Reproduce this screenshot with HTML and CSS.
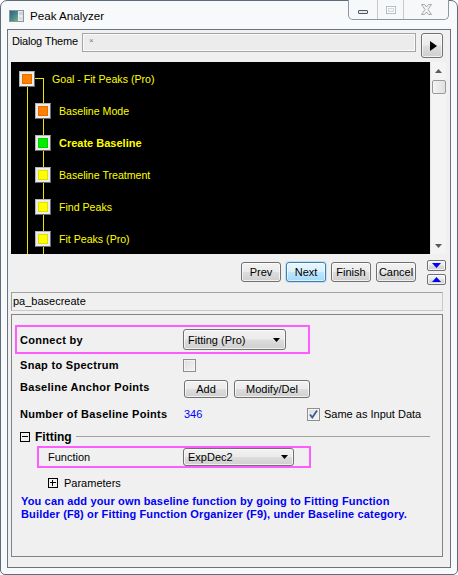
FILE: index.html
```html
<!DOCTYPE html>
<html>
<head>
<meta charset="utf-8">
<title>Peak Analyzer</title>
<link rel="stylesheet" href="styles.css">
</head>
<body>
<div class="window">
  <div class="titlebar">
    <svg class="app-icon" width="15" height="12" viewBox="0 0 15 12">
      <defs>
        <linearGradient id="ig" x1="0" y1="0" x2="1" y2="1">
          <stop offset="0" stop-color="#2a5f86"/>
          <stop offset="0.6" stop-color="#4f8f8a"/>
          <stop offset="1" stop-color="#7fb07a"/>
        </linearGradient>
      </defs>
      <rect x="0.5" y="0.5" width="14" height="11" fill="#e8ecef" stroke="#8a96a0"/>
      <rect x="1" y="1" width="8" height="10" fill="url(#ig)"/>
      <rect x="10" y="2" width="4" height="3" fill="#c9d3da"/>
      <rect x="10" y="7" width="4" height="3" fill="#d7dee3"/>
    </svg>
    <span class="title">Peak Analyzer</span>
    <div class="caption-btns">
      <div class="cb cb-min"><span class="min-glyph"></span></div>
      <div class="cb cb-max"><span class="max-glyph"></span></div>
      <div class="cb cb-close">
        <svg width="13" height="11" viewBox="0 0 13 11">
          <path d="M1.5 0.5 L4.5 0.5 L6.5 3 L8.5 0.5 L11.5 0.5 L8 5.5 L11.5 10.5 L8.5 10.5 L6.5 8 L4.5 10.5 L1.5 10.5 L5 5.5 Z" fill="#f4f4f4" stroke="#a9a9a9"/>
        </svg>
      </div>
    </div>
  </div>

  <div class="client">
    <div class="theme-row">
      <span class="theme-label">Dialog Theme</span>
      <div class="theme-input"><span class="theme-x">×</span></div>
      <button class="btn arrow-btn"><span class="tri-right"></span></button>
    </div>

    <div class="tree-panel">
      <div class="tree">
        <span class="tline v1"></span>
        <span class="tline h1"></span>
        <span class="tline v2"></span>
        <div class="node goal"><span class="nbox"><span class="nfill orange"></span></span><span class="nlabel">Goal - Fit Peaks (Pro)</span></div>
        <div class="node child"><span class="nbox"><span class="nfill orange"></span></span><span class="nlabel">Baseline Mode</span></div>
        <div class="node child"><span class="nbox"><span class="nfill green"></span></span><span class="nlabel cur">Create Baseline</span></div>
        <div class="node child"><span class="nbox"><span class="nfill yellow"></span></span><span class="nlabel">Baseline Treatment</span></div>
        <div class="node child"><span class="nbox"><span class="nfill yellow"></span></span><span class="nlabel">Find Peaks</span></div>
        <div class="node child"><span class="nbox"><span class="nfill yellow"></span></span><span class="nlabel">Fit Peaks (Pro)</span></div>
      </div>
      <div class="vscroll">
        <div class="sb-arrow"><svg width="7" height="4" viewBox="0 0 7 4"><polygon points="0,4 3.5,0 7,4" fill="#5a5a5a"/></svg></div>
        <div class="sb-thumb"></div>
        <div class="sb-track"></div>
        <div class="sb-arrow"><svg width="7" height="4" viewBox="0 0 7 4"><polygon points="0,0 7,0 3.5,4" fill="#5a5a5a"/></svg></div>
      </div>
    </div>

    <div class="nav-row">
      <button class="btn nav-btn">Prev</button>
      <button class="btn nav-btn btn-focus">Next</button>
      <button class="btn nav-btn">Finish</button>
      <button class="btn nav-btn">Cancel</button>
      <div class="mini-col">
        <button class="btn mini-btn"><svg width="9" height="5" viewBox="0 0 9 5"><polygon points="0,0 9,0 4.5,5" fill="#0000ff"/></svg></button>
        <button class="btn mini-btn"><svg width="9" height="5" viewBox="0 0 9 5"><polygon points="0,5 4.5,0 9,5" fill="#0000ff"/></svg></button>
      </div>
    </div>

    <div class="name-field">pa_basecreate</div>

    <div class="settings">
      <div class="hl-row hl-connect">
        <span class="lbl b">Connect by</span>
        <div class="btn combo combo-connect"><span>Fitting (Pro)</span><svg class="caret" width="7" height="4" viewBox="0 0 7 4"><polygon points="0,0 7,0 3.5,4" fill="#000"/></svg></div>
      </div>
      <div class="row row-snap">
        <span class="lbl b">Snap to Spectrum</span>
        <span class="check"></span>
      </div>
      <div class="row row-anchor">
        <span class="lbl b lift">Baseline Anchor Points</span>
        <button class="btn btn-add">Add</button>
        <button class="btn btn-mod">Modify/Del</button>
      </div>
      <div class="row row-num">
        <span class="lbl b">Number of Baseline Points</span>
        <span class="num">346</span>
        <span class="check"><svg width="11" height="11" viewBox="0 0 11 11"><path d="M2 5.5 L4.3 8.5 L9 1.5" fill="none" stroke="#3d5a98" stroke-width="1.8"/></svg></span>
        <span class="chk-text">Same as Input Data</span>
      </div>
      <div class="group-row">
        <span class="tog"><span class="tog-h"></span></span>
        <span class="b group-name">Fitting</span>
        <span class="group-line"></span>
      </div>
      <div class="hl-row hl-func">
        <span class="lbl2">Function</span>
        <div class="btn combo combo-func"><span>ExpDec2</span><svg class="caret" width="7" height="4" viewBox="0 0 7 4"><polygon points="0,0 7,0 3.5,4" fill="#000"/></svg></div>
      </div>
      <div class="param-row">
        <span class="tog"><span class="tog-h"></span><span class="tog-v"></span></span>
        <span class="param-name">Parameters</span>
      </div>
      <p class="note">You can add your own baseline function by going to Fitting Function<br>Builder (F8) or Fitting Function Organizer (F9), under Baseline category.</p>
    </div>
  </div>
</div>
</body>
</html>
```

FILE: styles.css
```css
* { box-sizing: border-box; }
html, body { margin: 0; padding: 0; }
body {
  width: 458px;
  height: 575px;
  overflow: hidden;
  background: #ffffff;
  font-family: "Liberation Sans", Arial, sans-serif;
  font-size: 11px;
  color: #000;
}
button { font-family: inherit; font-size: 11px; color: #000; padding: 0; margin: 0; }

.window {
  width: 458px;
  height: 575px;
  border: 1px solid #5e6c7a;
  border-radius: 7px 7px 5px 5px;
  background: #f8f9fa;
  display: flex;
  flex-direction: column;
  padding-bottom: 6px;
}

/* title bar */
.titlebar { height: 28px; flex: none; display: flex; align-items: flex-start; }
.app-icon { margin: 9px 0 0 8px; flex: none; }
.title { margin: 6px 0 0 6px; font-size: 11.6px; line-height: 17px; }
.caption-btns {
  margin: -1px 8px 0 auto;
  display: flex;
  height: 20px;
  border: 1px solid #8b97a4;
  border-top: none;
  border-radius: 0 0 5px 5px;
  background: #f7f8f9;
  overflow: hidden;
}
.cb { height: 19px; display: flex; align-items: center; justify-content: center; }
.cb-min { width: 29px; border-right: 1px solid #c3cad1; }
.cb-max { width: 26px; border-right: 1px solid #c3cad1; }
.cb-close { width: 44px; }
.min-glyph { width: 10px; height: 4px; border: 1px solid #4d5560; background: #e8ecef; margin-top: 5px; border-radius: 1px; }
.max-glyph { width: 10px; height: 8px; border: 1px solid #b6bdc4; background: #f4f5f6; box-shadow: inset 0 0 0 1px #fff, inset 0 0 0 2px #d3d8dd; margin-top: 1px; }

/* client area */
.client {
  flex: 1;
  margin: 0 6px;
  border: 1px solid #67737f;
  background: #f0f0f0;
  display: flex;
  flex-direction: column;
  padding: 3px 0 0 3px;
}

.theme-row { display: flex; height: 25px; flex: none; }
.theme-label { margin-left: 1px; width: 70px; line-height: 16px; letter-spacing: -0.2px; }
.theme-input {
  width: 334px;
  height: 19px;
  border: 1px solid #a4a4a4;
  box-shadow: inset 0 0 0 1px #fafafa;
  background: #ececec;
  position: relative;
}
.theme-x { position: absolute; left: 6px; top: 2px; font-size: 8px; color: #777; }
.arrow-btn { margin-left: 5px; width: 22px; height: 25px; display: flex; align-items: center; justify-content: center; }
.tri-right { width: 0; height: 0; border-top: 5px solid transparent; border-bottom: 5px solid transparent; border-left: 7px solid #000; margin-left: 2px; }

/* generic Win7 button */
.btn {
  border: 1px solid #707070;
  border-radius: 3px;
  background: linear-gradient(#f2f2f2 0%, #ebebeb 48%, #dddddd 52%, #cfcfcf 100%);
  box-shadow: inset 0 0 0 1px rgba(255,255,255,0.7);
}
.btn-focus {
  border-color: #3c7fb1;
  background: linear-gradient(#eaf6fd 0%, #d9f0fc 48%, #bee6fd 52%, #a7d9f5 100%);
  box-shadow: inset 0 0 0 1px rgba(255,255,255,0.6), 0 0 0 1px rgba(120,190,235,0.35);
}

/* tree */
.tree-panel { margin-top: 4px; width: 435px; height: 192px; display: flex; flex: none; }
.tree { flex: 1; background: #000; position: relative; padding-top: 1px; overflow: hidden; }
.tline { position: absolute; background: #e8e800; }
.v1 { left: 16px; top: 24px; bottom: 0; width: 1px; }
.h1 { left: 24px; top: 16px; width: 8px; height: 1px; }
.v2 { left: 32px; top: 16px; bottom: 0; width: 1px; }
.node { height: 32px; display: flex; align-items: center; position: relative; }
.nbox {
  width: 16px; height: 16px; flex: none;
  border: 1px solid;
  border-color: #b4b4b4 #6a6a6a #6a6a6a #b4b4b4;
  background: #ececec;
  padding: 2px;
  display: flex;
}
.nfill { flex: 1; border: 1px solid rgba(0,0,0,0.12); }
.orange { background: #ff8000; }
.green { background: #00ee00; }
.yellow { background: #ffff00; }
.goal .nbox { margin-left: 8px; }
.goal .nlabel { margin-left: 17px; }
.child .nbox { margin-left: 24px; }
.child .nlabel { margin-left: 8px; }
.nlabel { color: #ffff00; font-size: 10.6px; white-space: nowrap; }
.nlabel.cur { font-weight: bold; font-size: 11px; }

.vscroll { width: 16px; background: #f4f4f4; border-left: 1px solid #e6e6e6; display: flex; flex-direction: column; align-items: center; }
.sb-arrow { height: 17px; width: 100%; display: flex; align-items: center; justify-content: center; }
.sb-thumb {
  margin-top: 1px;
  width: 14px; height: 14px;
  border: 1px solid #9a9a9a;
  border-radius: 2px;
  background: linear-gradient(90deg, #f4f4f4, #e0e0e0);
}
.sb-track { flex: 1; }

/* nav row */
.nav-row { margin-top: 5px; width: 435px; height: 26px; flex: none; display: flex; justify-content: flex-end; align-items: center; gap: 5px; }
.nav-btn { width: 40px; height: 20px; line-height: 16px; }
.mini-col { margin-left: 6px; display: flex; flex-direction: column; gap: 3px; }
.mini-btn { width: 19px; height: 11px; display: flex; align-items: center; justify-content: center; border-radius: 2px; }

.name-field {
  margin-top: 7px;
  width: 432px; height: 19px; flex: none;
  border: 1px solid #a0a0a0;
  border-bottom-color: #c9c9c9;
  border-right-color: #c9c9c9;
  background: #f0f0f0;
  padding-left: 1px;
  line-height: 17px;
}

/* settings panel */
.settings {
  margin-top: 3px;
  width: 432px; height: 243px; flex: none;
  border: 1px solid #838383;
  padding: 10px 0 0 3px;
  display: flex;
  flex-direction: column;
}
.b { font-weight: bold; }
.lbl.b { letter-spacing: 0.3px; }
.hl-row { border: 2px solid #ff5cff; display: flex; align-items: center; flex: none; }
.hl-connect { width: 295px; height: 29px; padding-left: 3px; }
.lbl { width: 163px; flex: none; white-space: nowrap; }
.combo { display: flex; align-items: center; justify-content: space-between; padding: 0 5px 0 4px; }
.combo-connect { width: 103px; height: 21px; }
.combo-func { width: 111px; height: 18px; }
.caret { flex: none; }

.row { display: flex; align-items: center; height: 22px; padding-left: 5px; flex: none; }
.row-anchor { margin-top: 2px; }
.row-num { margin-top: 3px; }
.lift { margin-bottom: 5px; }
.check {
  width: 13px; height: 13px; flex: none;
  border: 1px solid #8e8f8f;
  background: linear-gradient(135deg, #dcdcdc, #f6f6f6);
  box-shadow: inset 0 0 0 1px #f4f4f4;
  display: flex; align-items: center; justify-content: center;
}
.btn-add { margin-left: 1px; width: 44px; height: 18px; }
.btn-mod { margin-left: 6px; width: 76px; height: 18px; }
.num { margin-left: 1px; width: 123px; color: #0000ff; }
.chk-text { margin-left: 4px; }

.group-row { margin-top: 2px; height: 19px; display: flex; align-items: center; padding-left: 5px; flex: none; }
.tog { width: 10px; height: 10px; border: 1px solid #000; position: relative; flex: none; background: #f0f0f0; }
.tog-h { position: absolute; left: 1px; right: 1px; top: 3px; height: 1px; background: #000; }
.tog-v { position: absolute; top: 1px; bottom: 1px; left: 3px; width: 1px; background: #000; }
.group-name { margin-left: 5px; font-size: 12px; }
.group-line { flex: 1; height: 1px; background: #a0a0a0; margin: 0 12px 0 4px; }

.hl-func { margin-left: 22px; width: 274px; height: 22px; padding-left: 9px; }
.lbl2 { width: 135px; flex: none; }

.param-row { margin-top: 6px; height: 18px; display: flex; align-items: center; padding-left: 33px; flex: none; }
.param-name { margin-left: 6px; }

.note { margin: 3px 0 0 6px; line-height: 13px; color: #0000f5; font-weight: bold; white-space: nowrap; letter-spacing: 0.15px; }
```
